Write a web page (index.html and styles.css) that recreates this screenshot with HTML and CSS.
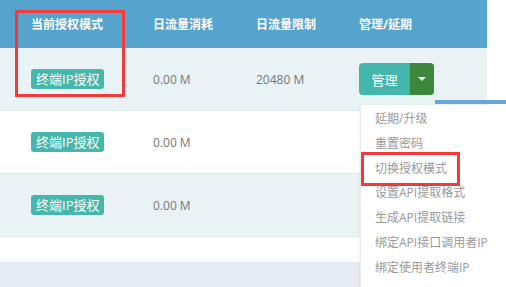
FILE: index.html
```html
<!DOCTYPE html>
<html lang="zh-CN">
<head>
    <meta charset="UTF-8">
    <title>授权管理</title>
    <link rel="stylesheet" href="styles.css">
</head>
<body>

<div class="page">
    <div class="grid-table">
        <div class="row head">
            <div class="cell first">当前授权模式</div>
            <div class="cell">日流量消耗</div>
            <div class="cell">日流量限制</div>
            <div class="cell">管理/延期</div>
        </div>
        <div class="row odd">
            <div class="cell first"><span class="badge">终端IP授权</span></div>
            <div class="cell">0.00 M</div>
            <div class="cell">20480 M</div>
            <div class="cell">
                <div class="btn-group">
                    <span class="btn-main">管理</span>
                    <span class="btn-caret"><i class="caret"></i></span>
                </div>
            </div>
        </div>
        <div class="row">
            <div class="cell first"><span class="badge">终端IP授权</span></div>
            <div class="cell">0.00 M</div>
            <div class="cell"></div>
            <div class="cell"></div>
        </div>
        <div class="row odd">
            <div class="cell first"><span class="badge">终端IP授权</span></div>
            <div class="cell">0.00 M</div>
            <div class="cell"></div>
            <div class="cell"></div>
        </div>
    </div>
    <div class="spacer"></div>
    <div class="footer-band"></div>

    <div class="scroll-bar"></div>
    <ul class="dropdown">
        <li>延期/升级</li>
        <li>重置密码</li>
        <li>切换授权模式</li>
        <li>设置API提取格式</li>
        <li>生成API提取链接</li>
        <li>绑定API接口调用者IP</li>
        <li>绑定使用者终端IP</li>
    </ul>

    <div class="mark mark-head"></div>
    <div class="mark mark-menu"></div>
</div>

</body>
</html>
```

FILE: styles.css
```css
body {
    margin: 0;
    font-family: 'Open Sans', 'Noto Sans CJK SC', sans-serif;
    font-size: 12px;
    color: #777;
    background-color: #fff;
}

.page {
    position: relative;
    width: 506px;
    height: 287px;
    overflow: hidden;
}

.grid-table {
    width: 487px;
}

.row {
    display: grid;
    grid-template-columns: 153px 103px 103px 128px;
    align-items: center;
    height: 62px;
    border-bottom: 1px solid #e1eaee;
}

.row.odd {
    background-color: #e9f2f5;
}

.row.head {
    height: 48px;
    background-color: #56a3ce;
    color: #fff;
    font-weight: bold;
    border-bottom: none;
}

.cell.first {
    padding-left: 31px;
}

.badge {
    display: inline-block;
    background-color: #45b7ac;
    color: #fff;
    font-size: 13px;
    height: 20px;
    line-height: 20px;
    padding: 0 5px;
    border-radius: 3px;
}

.btn-group {
    display: flex;
    width: 75px;
    height: 32px;
    border-radius: 4px;
    overflow: hidden;
}

.btn-main {
    width: 51px;
    background-color: #45b6ac;
    color: #fff;
    font-size: 13px;
    display: flex;
    align-items: center;
    justify-content: center;
}

.btn-caret {
    flex-grow: 1;
    background-color: #3b873b;
    display: flex;
    align-items: center;
    justify-content: center;
}

.caret {
    width: 0;
    height: 0;
    border-left: 4px solid transparent;
    border-right: 4px solid transparent;
    border-top: 4px solid #fff;
}

.spacer {
    height: 25px;
}

.footer-band {
    height: 27px;
    background-color: #e7ebf3;
}

.scroll-bar {
    position: absolute;
    left: 435px;
    top: 100px;
    width: 71px;
    height: 4px;
    background-color: #6aa6dc;
}

.dropdown {
    position: absolute;
    left: 360px;
    top: 105px;
    width: 160px;
    height: 200px;
    margin: 0;
    padding: 2px 0 0 14px;
    list-style: none;
    background-color: #fff;
    border-left: 1px solid #ebebeb;
    box-shadow: -1px 0 3px rgba(0, 0, 0, 0.05);
    color: #999;
}

.dropdown li {
    line-height: 24.8px;
    white-space: nowrap;
}

.mark {
    position: absolute;
    border: 3px solid #f33a3a;
}

.mark-head {
    left: 15px;
    top: 10px;
    width: 104px;
    height: 81px;
}

.mark-menu {
    left: 361px;
    top: 152px;
    width: 93px;
    height: 28px;
}
```
